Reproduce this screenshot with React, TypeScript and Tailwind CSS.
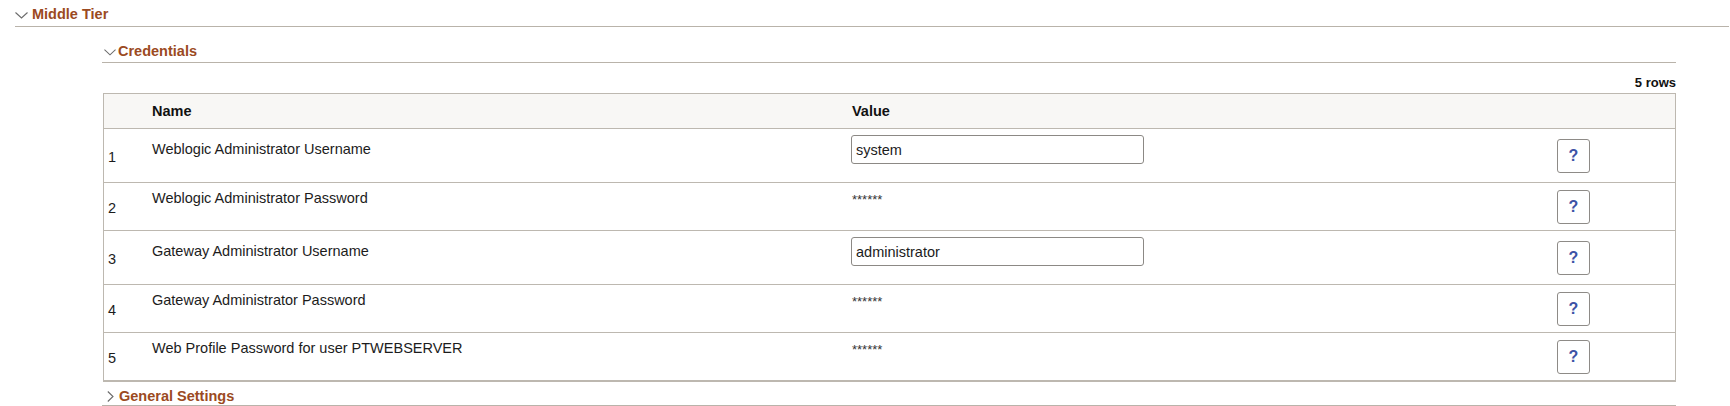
import React from "react";

type Row = { label: string; value: string; input: boolean };

const rows: Row[] = [
  { label: "Weblogic Administrator Username", value: "system", input: true },
  { label: "Weblogic Administrator Password", value: "******", input: false },
  { label: "Gateway Administrator Username", value: "administrator", input: true },
  { label: "Gateway Administrator Password", value: "******", input: false },
  { label: "Web Profile Password for user PTWEBSERVER", value: "******", input: false },
];

function ChevronDown({ className }: { className?: string }) {
  return (
    <svg className={className} viewBox="0 0 13 7" fill="none">
      <polyline points="0.5,0.5 6.5,6 12.5,0.5" stroke="#6b6b6b" strokeWidth="1.1" />
    </svg>
  );
}

function ChevronRight({ className }: { className?: string }) {
  return (
    <svg className={className} viewBox="0 0 7 11" fill="none">
      <polyline points="0.8,0.5 6,5.5 0.8,10.5" stroke="#6b6b6b" strokeWidth="1.1" />
    </svg>
  );
}

function HelpButton() {
  return (
    <button className="flex h-[34px] w-[33px] items-center justify-center rounded-[3px] border border-[#8e8b87] bg-white text-[16px] font-bold text-[#3d53a6]">
      ?
    </button>
  );
}

export default function App() {
  return (
    <div className="min-h-screen bg-white pl-[15px] pr-px font-['Liberation_Sans',Arial,sans-serif] text-[14.5px] text-[#1c1c1c]">
      {/* Middle Tier section */}
      <div className="flex h-[27px] items-start border-b border-[#b9b3aa] pt-[6px] leading-4">
        <ChevronDown className="mt-[6px] h-[7px] w-[13px]" />
        <span className="ml-[4px] font-bold text-[#9b4a22]">Middle Tier</span>
      </div>

      <div className="ml-[87px] mr-[53px]">
        {/* Credentials subsection */}
        <div className="mt-[10px] flex h-[26px] items-start border-b border-[#b9b3aa] pt-[6px] leading-4">
          <ChevronDown className="ml-[2px] mt-[6px] h-[7px] w-[12px]" />
          <span className="ml-[2px] font-bold text-[#9b4a22]">Credentials</span>
        </div>

        <div className="mt-[12px] h-4 text-right text-[13px] font-bold leading-4 text-[#111]">5 rows</div>

        <div className="ml-px mt-[2px] border border-b-2 border-[#bdb8b0]">
          <div className="grid h-[34px] grid-cols-[48px_699px_706px_1fr] items-center bg-[#f8f7f5] font-bold leading-4 text-[#111]">
            <div />
            <div>Name</div>
            <div className="pl-px">Value</div>
            <div />
          </div>

          {rows.map((r, i) => (
            <div
              key={r.label}
              className={`grid grid-cols-[48px_699px_706px_1fr] border-t border-[#bdb8b0] leading-4 ${
                r.input ? "h-[54px]" : "h-[48px]"
              }`}
            >
              <div className="flex items-center pl-[4px] pt-[2px]">{i + 1}</div>
              <div className={r.input ? "pt-[12px]" : "pt-[7px]"}>{r.label}</div>
              <div className={r.input ? "pt-[6px]" : "pl-px pt-[8px]"}>
                {r.input ? (
                  <div className="flex h-[29px] w-[293px] items-center rounded-[3px] border border-[#8c8985] bg-white pl-[4px] text-[#1c1c1c]">
                    {r.value}
                  </div>
                ) : (
                  <span className="text-[13px] text-[#333]">{r.value}</span>
                )}
              </div>
              <div className="flex items-center">
                <HelpButton />
              </div>
            </div>
          ))}
        </div>

        {/* General Settings subsection */}
        <div className="mt-[3px] flex h-[21px] items-start border-b border-[#b9b3aa] pt-[3px] leading-4">
          <ChevronRight className="ml-[5px] mt-[3px] h-[11px] w-[7px]" />
          <span className="ml-[5px] font-bold text-[#9b4a22]">General Settings</span>
        </div>
      </div>
    </div>
  );
}
